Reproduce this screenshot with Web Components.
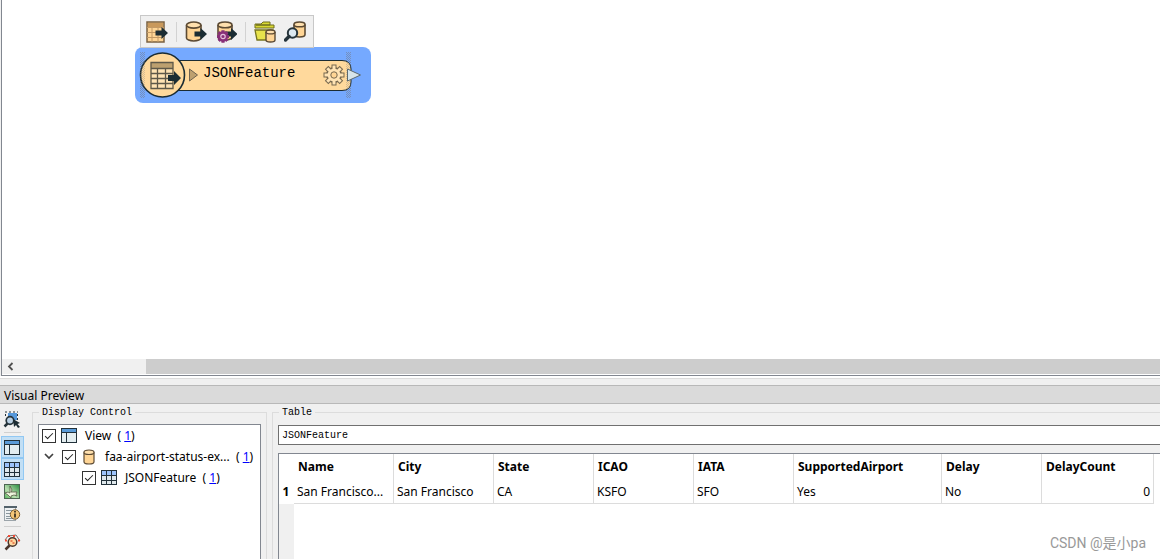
<!DOCTYPE html>
<html lang="en">
<head>
<meta charset="utf-8">
<title>Workspace</title>
<style>
  html, body { margin: 0; height: 100%; }
  body { font: 12px/20px "Noto Sans", "Noto Sans CJK SC", sans-serif; color: #000; background: #f0f0f0; overflow: hidden; }
</style>
</head>
<body>
<work-bench></work-bench>
<script>
const CYL = (x, y, w, h, s = 1.6) => {
  const r = w / 2, k = h * 0.16;
  return `<path d="M${x} ${y + k}v${h - 2 * k}a${r} ${k} 0 0 0 ${w} 0v-${h - 2 * k}" fill="#ffd595" stroke="#5c4a33" stroke-width="${s}"/><ellipse cx="${x + r}" cy="${y + k}" rx="${r}" ry="${k}" fill="#ffe0ae" stroke="#5c4a33" stroke-width="${s}"/>`;
};
const ARROW = (x, y) => `<path d="M${x} ${y - 2.5}h6v-3.500l6.500 6-6.500 6v-3.500h-6z" fill="#1b2c33"/>`;
const TEETH = n => Array.from({ length: n }, (_, i) => i * 360 / n);
const ICONS = {
  'table-out': `<rect x="1" y="1" width="17" height="20" fill="#ffd595" stroke="#7a6040" stroke-width="1.500"/><path d="M2 2h15v4H2z" fill="#c9995c"/><path d="M1 6.500h17M1 11.500h17M1 16.500h17M6 6v15M12 6v15" stroke="#c39a66" fill="none"/>${ARROW(9.5, 12)}`,
  'db-out': CYL(1.5, 1, 14.5, 19) + ARROW(9.5, 13),
  'db-gear': CYL(3, 1, 14, 18) + ARROW(10, 13) + `<g fill="#883078">${TEETH(8).map(a => `<rect x="6.500" y="9.500" width="3" height="12" transform="rotate(${a} 8 15.500)"/>`).join('')}<circle cx="8" cy="15.500" r="5"/></g><circle cx="8" cy="15.500" r="2.200" fill="none" stroke="#e7bfdc" stroke-width="1.200"/>`,
  'folder-db': `<path d="M2 4h14V1H9L7 3H1v4h19V4z" fill="#d9d934" stroke="#6e6d1d"/><path d="M1 9h18l-1 10H3z" fill="#e8e34c" stroke="#77751f" stroke-width="1.300"/>` + CYL(12, 9, 9, 12, 1.4),
  'db-find': CYL(10, 1, 11, 15) + `<circle cx="8.500" cy="12" r="4.700" fill="#dce8f0" stroke="#26343b" stroke-width="2"/><path d="M5 15.500 1.500 19" stroke="#26343b" stroke-width="3.400" stroke-linecap="round"/>`,
  'select-find': `<rect x="7" y="4" width="9" height="7" fill="#5598dc"/><path d="M4 3h2m2 0h2m2 0h2m2 0h1M4.500 5v2m12-2v2m0 2v2" stroke="#26343b"/><circle cx="9" cy="11.500" r="3.800" fill="#b9d0e4" stroke="#26343b" stroke-width="1.700"/><path d="M6.500 14.500l-3 3" stroke="#26343b" stroke-width="2.500"/><path d="M12 10l7 4-2.500 1 2.500 3-2 1-2-3-2 2z" fill="#1b2c33"/>`,
  'window': `<rect x="3.500" y="3.500" width="15" height="14" fill="#e3edf0" stroke="#22313a"/><path d="M4 4h14v3H4z" fill="#5a9bd8"/><path d="M3 7.500h16M8.500 7v11" stroke="#22313a"/>`,
  'grid': `<rect x="3.500" y="3.500" width="15" height="14" fill="#dfe8ec" stroke="#22313a"/><path d="M4 4h14v4H4z" fill="#9cc3fb"/><path d="M3 8.500h16M3 13.500h16M8.500 3v15M13.500 3v15" stroke="#22313a"/>`,
  'map': `<defs><linearGradient id="m" x1="1" x2="0" y2="1"><stop stop-color="#298b3f"/><stop offset=".6" stop-color="#b9dfb0"/><stop offset="1" stop-color="#57b45c"/></linearGradient></defs><rect x="3.500" y="3.500" width="15" height="14" fill="url(#m)" stroke="#4d6652"/><path d="M9 5l2 4-1 2h6l-1 2 1 2-3-1-3 1v2l-3-3-3-2 3-1 2 1z" fill="#eef5dd" stroke="#555b45" stroke-width=".8"/>`,
  'info': `<rect x="3.500" y="3.500" width="11" height="14" fill="#eef1f2" stroke="#9ba4aa"/><path d="M3 4h13" stroke="#53626b" stroke-width="2"/><path d="M5 7.500h8M5 10.500h8M5 13.500h8M5 15.500h8" stroke="#8b979e"/><circle cx="14" cy="11.500" r="4.700" fill="#f5c577" stroke="#7b5c31"/><path d="M14 10.500v4M14 8v1.500" stroke="#33291b" stroke-width="1.700"/>`,
  'find-feature': `<path d="M4 9l3-4 8-1 4 6" fill="none" stroke="#77706c"/><path d="M7 5h2m3 0h2M4 9.500h2m11 0h2" stroke="#f14b36" stroke-width="2"/><circle cx="11.500" cy="11" r="4.300" fill="#ffd8a0" stroke="#4a352c" stroke-width="1.500"/><path d="M9.500 10h2m0 2h2" stroke="#e5643e" stroke-width="1.500"/><path d="M8.500 14.500l-4 4" stroke="#4a352c" stroke-width="2.500"/>`,
  'db': CYL(6, 4, 10, 14, 1.2)
};

class BaseElement extends HTMLElement {
  connectedCallback() {
    if (this.shadowRoot) return;
    this.attachShadow({ mode: 'open' }).innerHTML = this.render();
  }
}
const define = (name, render) => customElements.define(name, class extends BaseElement {
  render() { return render(this); }
});

define('ui-icon', el => `<style>:host{display:block;width:22px;height:22px;flex:none}svg{display:block}</style>
<svg width="22" height="22" viewBox="0 0 22 22" aria-hidden="true">${ICONS[el.getAttribute('name')]}</svg>`);

define('tool-button', el => `<style>
:host{display:block;height:22px;flex:none}
button{display:block;box-sizing:border-box;width:100%;height:100%;margin:0;padding:var(--icon-inset,0);border:0;background:none}
:host([pressed]) button{background:#c2dff5;box-shadow:inset 0 0 0 1px #91c8f3}
</style><button type="button" aria-label="${el.getAttribute('label')}"><ui-icon name="${el.getAttribute('icon')}"></ui-icon></button>`);

define('mini-toolbar', () => `<style>
:host{display:flex;align-items:center;gap:8px;box-sizing:border-box;height:33px;padding:0 7px 0 5px;border:1px solid #c8c8c8;background:#f0f0f0}
i{width:1px;height:20px;background:#d2d2d2}
tool-button{width:22px}
</style>
<tool-button icon="table-out" label="Feature type"></tool-button><i></i>
<tool-button icon="db-out" label="Reader"></tool-button>
<tool-button icon="db-gear" label="Parameters"></tool-button><i></i>
<tool-button icon="folder-db" label="Open folder"></tool-button>
<tool-button icon="db-find" label="Inspect"></tool-button>`);

define('reader-node', () => `<style>
:host{display:block;position:relative;width:236px;height:56px}
svg{position:absolute;inset:0}
span{position:absolute;left:68px;top:16px;font:14px/20px "Liberation Mono",monospace}
</style>
<svg width="236" height="56" viewBox="0 0 236 56" aria-hidden="true">
<defs><pattern id="dots" width="2" height="2" patternUnits="userSpaceOnUse"><path d="M0 0h1v1H0zM1 1h1v1H1z" fill="#75777c"/></pattern></defs>
<rect width="236" height="56" rx="8" fill="#75a9ff"/>
<path d="M5 5h5v46H5zM211 5h5v46h-5z" fill="url(#dots)" opacity=".5"/>
<path d="M30 13.500H207Q216 13.500 216 22V35Q216 43.500 207 43.500H30z" fill="#ffd99c" stroke="#1b2c33"/>
<path d="M211 14h5v29h-5z" fill="url(#dots)" opacity=".3"/>
<circle cx="27.500" cy="28" r="22" fill="#ffd99c" stroke="#1b2c33" stroke-width="1.600"/>
<path d="M5 14h5v28H5z" fill="url(#dots)" opacity=".3"/>
<rect x="16" y="15.500" width="22" height="26" fill="#ffe3b4"/><path d="M16 15.500h22v6H16z" fill="#bda06f"/>
<path d="M16 15.500h22v26H16zM16 21.500h22M16 26.500h22M16 31.500h22M16 36.500h22M22.500 21.500v20M30.500 21.500v20" fill="none" stroke="#5e5849" stroke-width="1.300"/>
<path d="M33 28h6v-4l7 7-7 7v-4h-6z" fill="#1b2c33"/>
<path d="M54.500 22v12l8-6z" fill="#bda06f" stroke="#6f6350"/>
<path d="M212.500 22v12l13-6z" fill="#d7e4e9" stroke="#5b6970"/>
<g transform="translate(199 28)"><g fill="#ffe3b4" stroke="#77684f" stroke-width="2">${TEETH(8).map(a => `<rect x="-1.500" y="-9.500" width="3" height="7" transform="rotate(${a})"/>`).join('')}<circle r="7"/></g><g fill="#ffe3b4">${TEETH(8).map(a => `<rect x="-1.500" y="-9.500" width="3" height="7" transform="rotate(${a})"/>`).join('')}<circle r="6.300"/></g><circle r="3.200" fill="#ffd595" stroke="#77684f"/></g>
</svg><span>JSONFeature</span>`);

define('workspace-canvas', () => `<style>
:host{display:flex;flex-direction:column;min-height:0;position:relative;margin-left:1px;border-left:1px solid #828790;border-bottom:1px solid #828790;background:#fff}
main{flex:1}
reader-node{position:absolute;left:133px;top:47px}
mini-toolbar{position:absolute;left:138px;top:15px}
.bar{display:flex;height:15px;margin-bottom:1px;background:#f0f0f0}
button{width:16px;margin:0;padding:0;border:0;background:none}
svg{display:block}
.thumb{flex:1;margin-left:128px;background:#cdcdcd}
</style>
<main><reader-node></reader-node><mini-toolbar></mini-toolbar></main>
<div class="bar"><button type="button" aria-label="Scroll left"><svg width="16" height="15" viewBox="0 0 16 15"><path d="M10.500 4 7 7.500l3.500 3.500" fill="none" stroke="#505050" stroke-width="1.800"/></svg></button><div class="thumb"></div></div>`);

define('group-box', el => `<style>
:host{display:flex;min-width:0;padding-top:1px}
fieldset{flex:1;min-width:0;margin:0;padding:0 5px;border:1px solid #dcdcdc;border-bottom:0;display:flex;flex-direction:column}
:host([open-end]) fieldset{border-right:0;padding-right:0}
legend{margin-left:1px;padding:0 3px;font:10px/15px "Liberation Mono",monospace}
.body{display:flex;flex-direction:column;height:100%}
</style><fieldset><legend>${el.getAttribute('caption')}</legend><div class="body"><slot></slot></div></fieldset>`);

define('tree-row', el => `<style>
:host{display:flex;align-items:center;height:21px;padding-left:3px;white-space:nowrap;position:relative}
:host([level="1"]){padding-left:23px}
:host([level="2"]){padding-left:43px}
.fold{position:absolute;left:3px;top:3px;width:14px;height:14px;padding:0;border:0;background:none}
svg{display:block}
label{display:flex;align-items:center}
input{appearance:none;box-sizing:border-box;width:14px;height:14px;margin:0;border:1px solid #333;background:#fff;display:grid;place-items:center}
input:checked::after{content:"";width:7px;height:3px;border:solid #222;border-width:0 0 1px 1px;transform:translateY(-1px) rotate(-45deg)}
ui-icon{margin:0 5px 0 2px}
a{color:#00f}
</style>
${el.hasAttribute('open') ? '<button class="fold" type="button" aria-label="Collapse"><svg width="14" height="14" viewBox="0 0 14 14"><path d="M3 5l4 4 4-4" fill="none" stroke="#404040" stroke-width="1.700"/></svg></button>' : ''}
<label><input type="checkbox" checked><ui-icon name="${el.getAttribute('icon')}"></ui-icon><slot></slot></label><span>&nbsp; ( <a href="#">1</a>)</span>`);

define('display-tree', () => `<style>
:host{display:block;flex:1;border:1px solid #828790;border-bottom:0;background:#fff;margin-top:4px;overflow:hidden}
</style><tree-row icon="window">View</tree-row><tree-row icon="db" level="1" open>faa-airport-status-ex...</tree-row><tree-row icon="grid" level="2">JSONFeature</tree-row>`);

const COLUMNS = [['Name', 'San Francisco...', 100], ['City', 'San Francisco', 100], ['State', 'CA', 100], ['ICAO', 'KSFO', 100], ['IATA', 'SFO', 100], ['SupportedAirport', 'Yes', 148], ['Delay', 'No', 100], ['DelayCount', '0', 112]];
define('feature-table', () => `<style>
:host{display:flex;flex-direction:column;flex:1}
select{appearance:none;display:block;box-sizing:border-box;width:100%;height:20px;margin:5px 0 8px;padding:1px 3px 0;border:1px solid #707070;border-right:0;border-radius:0;background:#fff;color:#000;font:10px/17px "Liberation Mono",monospace}
.view{flex:1;border:1px solid #828790;border-width:1px 0 0 1px;background:linear-gradient(90deg,#f0f0f0 15px,#fff 15px)}
table{table-layout:fixed;width:875px;border-collapse:separate;border-spacing:0;background:#fff}
th,td{box-sizing:border-box;height:25px;padding:0 3px;line-height:20px;text-align:left;white-space:nowrap;border-right:1px solid #dcdcdc}
thead th{padding-left:4px}
td{padding-top:2px;border-bottom:1px solid #dcdcdc}
thead th:first-child,tbody th{border-right-color:transparent;padding:0;text-align:center}
td:last-child{text-align:right}
</style>
<select aria-label="Feature type"><option>JSONFeature</option></select>
<div class="view"><table><colgroup><col style="width:15px">${COLUMNS.map(c => `<col style="width:${c[2]}px">`).join('')}</colgroup>
<thead><tr><th></th>${COLUMNS.map(c => `<th scope="col">${c[0]}</th>`).join('')}</tr></thead>
<tbody><tr><th scope="row">1</th>${COLUMNS.map(c => `<td>${c[1]}</td>`).join('')}</tr></tbody></table></div>`);

define('tool-strip', () => `<style>
:host{display:block;width:23px;padding:4px 0 0 1px;--icon-inset:1px 0 0 0}
hr{width:17px;height:1px;margin:2px 0 3px 3px;border:0;background:#d0d0d0}
</style>
<tool-button icon="select-find" label="Inspect selection"></tool-button><hr>
<tool-button icon="window" label="Display control" pressed></tool-button>
<tool-button icon="grid" label="Table" pressed></tool-button>
<tool-button icon="map" label="Graphics"></tool-button>
<tool-button icon="info" label="Feature information"></tool-button><hr>
<tool-button icon="find-feature" label="Inspect feature"></tool-button>`);

define('preview-panel', () => `<style>
:host{display:flex;flex-direction:column;height:174px}
h2{margin:0;padding:2px 4px 0;border:1px solid #b8b8b8;border-width:1px 0;background:#dadada;font:12px/15px "Noto Sans",sans-serif}
.body{flex:1;display:grid;grid-template-columns:24px 235px minmax(0,1fr);min-height:0}
.body>:nth-child(2){margin-left:8px;width:235px;box-sizing:border-box}
.body>:nth-child(3){margin-left:13px}
</style><h2>Visual Preview</h2>
<div class="body"><tool-strip></tool-strip>
<group-box caption="Display Control"><display-tree></display-tree></group-box>
<group-box caption="Table" open-end><feature-table></feature-table></group-box></div>`);

define('work-bench', () => `<style>
:host{display:grid;grid-template-rows:minmax(0,1fr) 9px auto;height:100vh}
.split{box-sizing:border-box;border-top:2px solid #fff;box-shadow:inset 0 1px #dcdcdc;background:#f0f0f0}
footer{position:absolute;right:14px;bottom:6px;font:14px/20px Roboto,"Noto Sans CJK SC",sans-serif;color:#999}
</style><workspace-canvas></workspace-canvas><div class="split"></div><preview-panel></preview-panel><footer>CSDN @是小pa</footer>`);
</script>
</body>
</html>
